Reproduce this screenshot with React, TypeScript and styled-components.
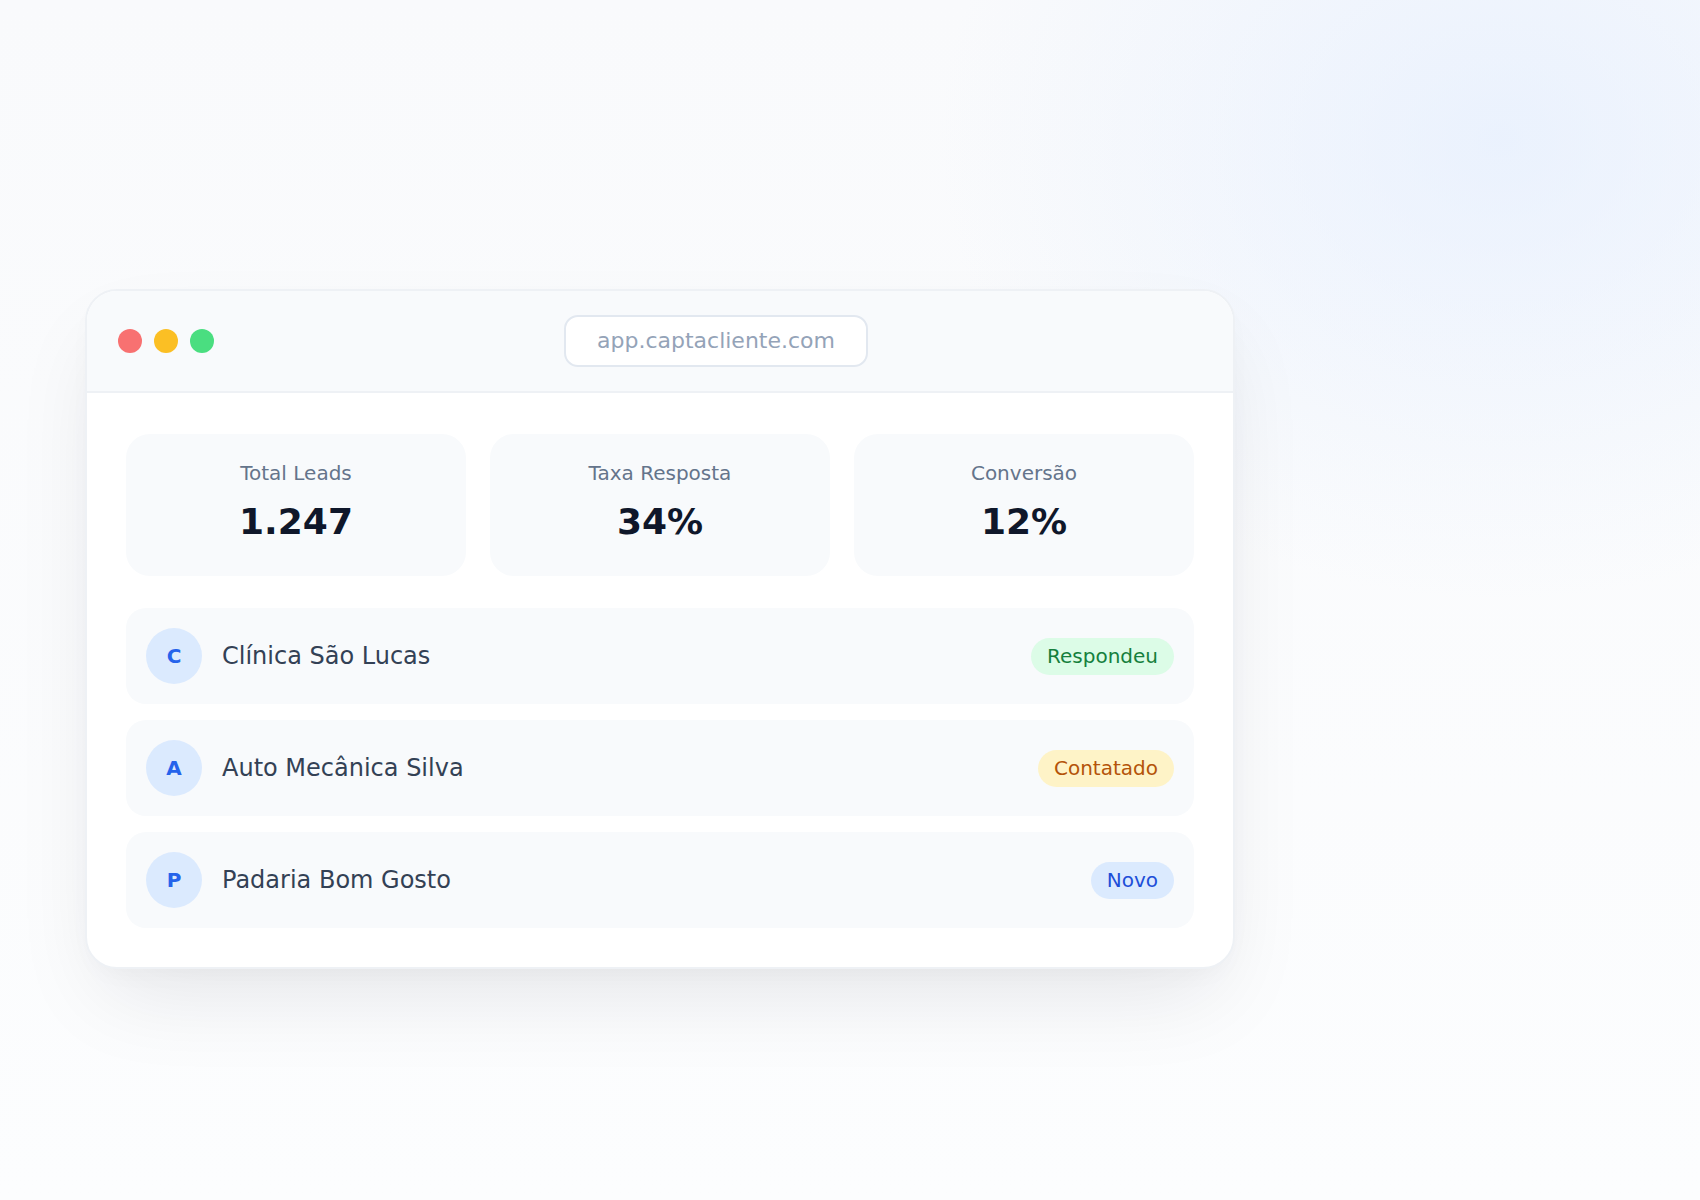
import styled, { createGlobalStyle } from "styled-components";

const GlobalStyle = createGlobalStyle`
  html, body {
    margin: 0;
    padding: 0;
  }
  body {
    font-family: "DejaVu Sans", "Liberation Sans", sans-serif;
    background: #fafbfd;
  }
  * {
    box-sizing: border-box;
  }
`;

const Page = styled.div`
  width: 1700px;
  height: 1200px;
  overflow: hidden;
  padding: 289px 0 0 85px;
  background:
    radial-gradient(ellipse 560px 460px at 1500px 140px, rgba(228, 238, 254, 0.7) 0%, rgba(228, 238, 254, 0) 100%),
    linear-gradient(180deg, #f9fafc 0%, #fcfdfe 100%);
`;

const BrowserWindow = styled.div`
  width: 1150px;
  background: #ffffff;
  border: 2px solid #eef1f5;
  border-radius: 32px;
  overflow: hidden;
  box-shadow: 0 40px 90px -20px rgba(15, 23, 42, 0.1), 0 10px 30px -10px rgba(15, 23, 42, 0.04);
`;

const TitleBar = styled.div`
  height: 102px;
  display: flex;
  align-items: center;
  gap: 16px;
  padding: 0 31px;
  background: #f8fafc;
  border-bottom: 2px solid #eef1f5;
`;

const Dots = styled.div`
  display: flex;
  gap: 12px;
`;

const Dot = styled.span<{ $color: string }>`
  width: 24px;
  height: 24px;
  border-radius: 50%;
  background: ${(p) => p.$color};
`;

const UrlArea = styled.div`
  flex: 1;
  display: flex;
  justify-content: center;
`;

const UrlBar = styled.div`
  height: 52px;
  padding: 0 31px;
  background: #ffffff;
  border: 2px solid #e2e8f0;
  border-radius: 14px;
  font-size: 22px;
  line-height: 47px;
  color: #94a3b8;
`;

const Body = styled.div`
  padding: 41px 39px 39px;
  display: flex;
  flex-direction: column;
  gap: 32px;
`;

const StatsGrid = styled.div`
  display: grid;
  grid-template-columns: repeat(3, 1fr);
  gap: 24px;
`;

const StatCard = styled.div`
  height: 142px;
  padding: 25px 16px 0;
  background: #f8fafc;
  border-radius: 24px;
  text-align: center;
`;

const StatLabel = styled.div`
  font-size: 20px;
  line-height: 28px;
  color: #64748b;
`;

const StatValue = styled.div`
  margin-top: 14px;
  font-size: 36px;
  line-height: 42px;
  font-weight: 700;
  color: #0f172a;
`;

const LeadList = styled.div`
  display: flex;
  flex-direction: column;
  gap: 16px;
`;

const LeadRow = styled.div`
  height: 96px;
  padding: 0 20px;
  display: flex;
  align-items: center;
  gap: 20px;
  background: #f8fafc;
  border-radius: 20px;
`;

const Avatar = styled.div`
  width: 56px;
  height: 56px;
  border-radius: 50%;
  background: #dbeafe;
  color: #2563eb;
  font-size: 20px;
  font-weight: 700;
  display: flex;
  align-items: center;
  justify-content: center;
`;

const LeadName = styled.div`
  flex: 1;
  font-size: 24px;
  color: #334155;
`;

const badgeColors = {
  green: { bg: "#dcfce7", fg: "#15803d" },
  amber: { bg: "#fef3c7", fg: "#b45309" },
  blue: { bg: "#dbeafe", fg: "#1d4ed8" },
};

type Tone = keyof typeof badgeColors;

const Badge = styled.span<{ $tone: Tone }>`
  height: 37px;
  padding: 0 16px;
  border-radius: 999px;
  font-size: 20px;
  line-height: 37px;
  background: ${(p) => badgeColors[p.$tone].bg};
  color: ${(p) => badgeColors[p.$tone].fg};
`;

const stats = [
  { label: "Total Leads", value: "1.247" },
  { label: "Taxa Resposta", value: "34%" },
  { label: "Conversão", value: "12%" },
];

const leads: { name: string; status: string; tone: Tone }[] = [
  { name: "Clínica São Lucas", status: "Respondeu", tone: "green" },
  { name: "Auto Mecânica Silva", status: "Contatado", tone: "amber" },
  { name: "Padaria Bom Gosto", status: "Novo", tone: "blue" },
];

export default function App() {
  return (
    <>
      <GlobalStyle />
      <Page>
        <BrowserWindow>
          <TitleBar>
            <Dots>
              <Dot $color="#f87171" />
              <Dot $color="#fbbf24" />
              <Dot $color="#4ade80" />
            </Dots>
            <UrlArea>
              <UrlBar>app.captacliente.com</UrlBar>
            </UrlArea>
          </TitleBar>
          <Body>
            <StatsGrid>
              {stats.map((s) => (
                <StatCard key={s.label}>
                  <StatLabel>{s.label}</StatLabel>
                  <StatValue>{s.value}</StatValue>
                </StatCard>
              ))}
            </StatsGrid>
            <LeadList>
              {leads.map((lead) => (
                <LeadRow key={lead.name}>
                  <Avatar>{lead.name.charAt(0)}</Avatar>
                  <LeadName>{lead.name}</LeadName>
                  <Badge $tone={lead.tone}>{lead.status}</Badge>
                </LeadRow>
              ))}
            </LeadList>
          </Body>
        </BrowserWindow>
      </Page>
    </>
  );
}
